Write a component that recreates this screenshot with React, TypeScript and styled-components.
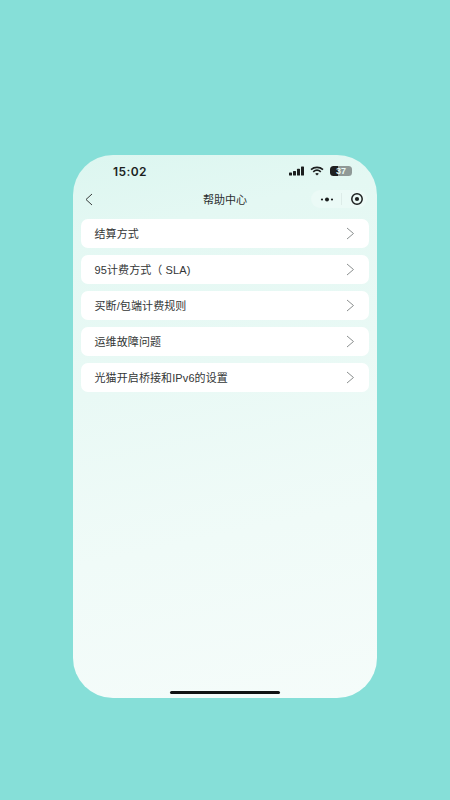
import React from "react";
import styled, { createGlobalStyle } from "styled-components";

const GlobalStyle = createGlobalStyle`
  html, body {
    margin: 0;
    padding: 0;
    background: #86dfd8;
  }
`;

const Page = styled.div`
  width: 450px;
  height: 800px;
  padding: 155px 73px 102px;
  box-sizing: border-box;
  background: #86dfd8;
  font-family: "Liberation Sans", "Noto Sans CJK SC", sans-serif;
`;

const Phone = styled.div`
  position: relative;
  width: 304px;
  height: 543px;
  border-radius: 40px;
  overflow: hidden;
  display: flex;
  flex-direction: column;
  background: linear-gradient(168deg, #dcf6f0 0%, #e4f8f3 14%, #e9f9f5 40%, #f0fbf8 68%, #f5fcfa 100%);
`;

const StatusBar = styled.div`
  height: 28px;
  padding: 4px 25px 0 40px;
  box-sizing: border-box;
  display: flex;
  align-items: center;
  justify-content: space-between;
`;

const Time = styled.span`
  font-family: Inter, "Liberation Sans", sans-serif;
  font-size: 12px;
  font-weight: 600;
  letter-spacing: 0.4px;
  color: #1c1f1f;
`;

const StatusIcons = styled.div`
  display: flex;
  align-items: center;
  gap: 5px;
`;

const Battery = styled.div`
  width: 22px;
  height: 10px;
  margin-left: 1px;
  border-radius: 3.5px;
  background: linear-gradient(90deg, #1d2020 0 38%, #8f9997 38% 100%);
  color: #e8f8f4;
  font-size: 9px;
  font-weight: 700;
  line-height: 10px;
  text-align: center;
`;

const NavBar = styled.div`
  position: relative;
  height: 32px;
  padding: 0 10px 0 12px;
  display: flex;
  align-items: center;
  justify-content: space-between;
`;

const NavTitle = styled.div`
  position: absolute;
  left: 0;
  right: 0;
  text-align: center;
  font-size: 11px;
  color: #2b2f2f;
`;

const Capsule = styled.div`
  width: 56px;
  height: 18px;
  border-radius: 9px;
  background: rgba(255, 255, 255, 0.25);
  display: flex;
  align-items: center;
  padding-left: 9px;
  box-sizing: border-box;
`;

const CapsuleDivider = styled.div`
  width: 1px;
  height: 12px;
  margin: 0 8px 0 7px;
  background: rgba(120, 140, 135, 0.12);
`;

const List = styled.div`
  margin-top: 4px;
  padding: 0 8px;
  display: flex;
  flex-direction: column;
  gap: 7px;
`;

const Row = styled.div`
  height: 29px;
  padding: 0 14px 1px 13.5px;
  box-sizing: border-box;
  border-radius: 7px;
  background: #ffffff;
  display: flex;
  align-items: center;
  justify-content: space-between;
  font-size: 11px;
  letter-spacing: 0.1px;
  color: #333636;
`;

const HomeBar = styled.div`
  position: absolute;
  left: 97px;
  bottom: 4px;
  width: 110px;
  height: 3px;
  border-radius: 2px;
  background: #111313;
`;

const items = [
  "结算方式",
  "95计费方式（ SLA)",
  "买断/包端计费规则",
  "运维故障问题",
  "光猫开启桥接和IPv6的设置",
];

const Chevron = () => (
  <svg width="9" height="13" viewBox="0 0 9 13" fill="none">
    <path d="M1 1l6.5 5.5L1 12" stroke="#8b8f8f" strokeWidth="1" />
  </svg>
);

export default function App() {
  return (
    <Page>
      <GlobalStyle />
      <Phone>
        <StatusBar>
          <Time>15:02</Time>
          <StatusIcons>
            <svg width="16" height="10" viewBox="0 0 16 10" fill="#1c1f1f">
              <rect x="0" y="6.5" width="3" height="3" rx="0.6" />
              <rect x="4" y="5" width="3" height="4.5" rx="0.6" />
              <rect x="8" y="2.8" width="3" height="6.7" rx="0.6" />
              <rect x="12" y="0.5" width="3" height="9" rx="0.6" />
            </svg>
            <svg width="14" height="10" viewBox="0 0 14 10" fill="none" stroke="#1c1f1f" strokeWidth="1.7">
              <path d="M1 3.6C4.4.6 9.6.6 13 3.6" />
              <path d="M3.2 5.8c2.2-1.9 5.4-1.9 7.6 0" />
              <path d="M7 9.6 5.2 7.7c1-.8 2.6-.8 3.6 0z" fill="#1c1f1f" stroke="none" />
            </svg>
            <Battery>37</Battery>
          </StatusIcons>
        </StatusBar>
        <NavBar>
          <svg width="8" height="13" viewBox="0 0 8 13" fill="none">
            <path d="M7 1 1 6.5 7 12" stroke="#3a3d3d" strokeWidth="1" />
          </svg>
          <NavTitle>帮助中心</NavTitle>
          <Capsule>
            <svg width="14" height="5" viewBox="0 0 14 5" fill="#1c1f1f">
              <circle cx="2" cy="2.5" r="1.1" />
              <circle cx="7" cy="2.5" r="2" />
              <circle cx="12" cy="2.5" r="1.1" />
            </svg>
            <CapsuleDivider />
            <svg width="14" height="14" viewBox="0 0 14 14" fill="none">
              <circle cx="7" cy="7" r="5.2" stroke="#1c1f1f" strokeWidth="1.5" />
              <circle cx="7" cy="7" r="2.1" fill="#1c1f1f" />
            </svg>
          </Capsule>
        </NavBar>
        <List>
          {items.map((item) => (
            <Row key={item}>
              <span>{item}</span>
              <Chevron />
            </Row>
          ))}
        </List>
        <HomeBar />
      </Phone>
    </Page>
  );
}
